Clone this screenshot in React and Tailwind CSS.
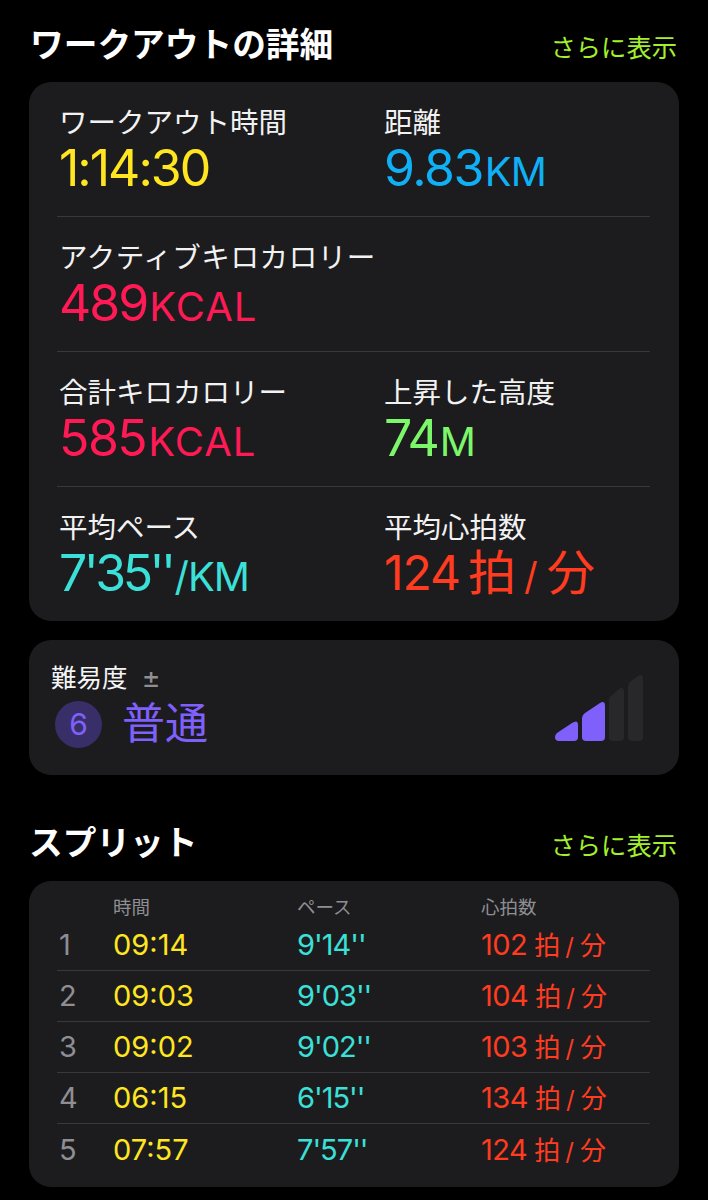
const font = { fontFamily: '"Inter", "Noto Sans CJK JP", sans-serif' }

function Metric({ label, value, unit, color, labelClass = '', valueClass = 'tracking-[-2px]', unitClass = 'tracking-[0px]' }) {
  return (
    <div className="min-w-0">
      <div className={`h-[34px] whitespace-nowrap text-[28.5px] leading-[34px] text-[#f2f2f2] ${labelClass}`}>{label}</div>
      <div className={`mt-[1px] flex h-[54px] items-baseline whitespace-nowrap text-[50px] leading-[54px] ${color}`}>
        <span className={valueClass}>{value}</span>
        {unit && <span className={`ml-[2px] text-[40px] ${unitClass}`}>{unit}</span>}
      </div>
    </div>
  )
}

function Header({ title, className }) {
  return (
    <div className={`flex items-center justify-between ${className}`}>
      <h2 className="whitespace-nowrap text-[33.7px] font-bold leading-[40px] text-white">{title}</h2>
      <span className="mt-[5px] text-[25.3px] leading-[32px] text-[#a4f02c]">さらに表示</span>
    </div>
  )
}

const splits = [
  ['1', '09:14', "9'14''", '102'],
  ['2', '09:03', "9'03''", '104'],
  ['3', '09:02', "9'02''", '103'],
  ['4', '06:15', "6'15''", '134'],
  ['5', '07:57', "7'57''", '124'],
]

function EffortBars() {
  return (
    <svg width="88" height="68" viewBox="0 0 88 68" className="block">
      <path d="M2 59 L17 49 Q23 45 23 51 V63 Q23 67 19 67 H4 Q0 67 0 63 Q0 61 2 59Z" fill="#7f60fb" />
      <path d="M27 44 Q27 41 30 39 L45 29 Q50 26 50 32 V63 Q50 67 46 67 H31 Q27 67 27 63Z" fill="#7f60fb" />
      <path d="M54 26 Q54 23 57 21 L64 15 Q69 12 69 18 V63 Q69 67 65 67 H58 Q54 67 54 63Z" fill="#28282a" />
      <path d="M73 12 Q73 9 76 7 L83 2 Q88 -1 88 5 V63 Q88 67 84 67 H77 Q73 67 73 63Z" fill="#28282a" />
    </svg>
  )
}

export default function App() {
  return (
    <div style={font} className="h-[1200px] w-[708px] overflow-hidden bg-black text-white">
      <Header title="ワークアウトの詳細" className="pl-[30px] pr-[31px] pt-[25px]" />

      <section className="mx-[29px] mt-[17px] h-[539px] rounded-[22px] bg-[#1c1c1e] pl-[28px] pr-[29px]">
        <div className="grid h-[135px] grid-cols-[325px_1fr] border-b border-[#38383a] pl-[2px] pt-[24px]">
          <Metric label="ワークアウト時間" value="1:14:30" color="text-[#ffe620]" />
          <Metric label="距離" value="9.83" valueClass="tracking-[-1.5px]" unit="KM" unitClass="tracking-[-1px]" color="text-[#0fb0f5]" />
        </div>
        <div className="h-[135px] border-b border-[#38383a] pl-[2px] pt-[24px]">
          <Metric label="アクティブキロカロリー" labelClass="tracking-[0.6px]" value="489" unit="KCAL" unitClass="tracking-[1px]" color="text-[#ff1a55]" />
        </div>
        <div className="grid h-[135px] grid-cols-[325px_1fr] border-b border-[#38383a] pl-[2px] pt-[24px]">
          <Metric label="合計キロカロリー" value="585" valueClass="tracking-[-1.5px]" unit="KCAL" unitClass="tracking-[1px]" color="text-[#ff1a55]" />
          <Metric label="上昇した高度" value="74" unit="M" color="text-[#7cf76a]" />
        </div>
        <div className="grid h-[134px] grid-cols-[325px_1fr] pl-[2px] pt-[24px]">
          <Metric label="平均ペース" value="7'35''" valueClass="tracking-[-3.5px]" unit="/KM" unitClass="tracking-[-1px]" color="text-[#3be0d8]" />
          <div className="min-w-0">
            <div className="h-[34px] whitespace-nowrap text-[28.5px] leading-[34px] text-[#f2f2f2]">平均心拍数</div>
            <div className="mt-[1px] flex h-[54px] items-baseline whitespace-nowrap text-[48px] leading-[54px] text-[#ff3b20]">
              <span className="tracking-[-1px]">124</span>
              <span className="ml-[8px]">拍</span>
              <span className="ml-[8px] text-[38px]">/</span>
              <span className="ml-[9px]">分</span>
            </div>
          </div>
        </div>
      </section>

      <section className="mx-[29px] mt-[19px] flex h-[135px] items-end justify-between rounded-[22px] bg-[#1c1c1e] pb-[27px] pl-[22px] pr-[36px]">
        <div>
          <div className="flex h-[32px] items-center text-[25.5px] leading-[32px] text-[#f5f5f5]">
            難易度
            <span className="ml-[14px] text-[29px] leading-[32px] text-[#8e8e93]">±</span>
          </div>
          <div className="mt-[7px] flex items-center pl-[4px]">
            <span className="flex h-[47px] w-[47px] items-center justify-center rounded-full bg-[#392f68] text-[30px] text-[#7f60fb]">6</span>
            <span className="ml-[20px] pb-[2px] text-[43px] leading-[45px] text-[#7f60fb]">普通</span>
          </div>
        </div>
        <div className="pb-[6px]">
          <EffortBars />
        </div>
      </section>

      <Header title="スプリット" className="pl-[29px] pr-[31px] pt-[48px]" />

      <section className="mx-[29px] mt-[18px] h-[306px] rounded-[22px] bg-[#1c1c1e] pl-[28px] pr-[29px] pt-[14px]">
        <div className="grid h-[25px] grid-cols-[56px_184px_184px_1fr] text-[18.5px] leading-[25px] text-[#8e8e93]">
          <span />
          <span>時間</span>
          <span>ペース</span>
          <span>心拍数</span>
        </div>
        {splits.map(([n, time, pace, hr], i) => (
          <div
            key={n}
            className={`grid h-[51px] grid-cols-[56px_184px_184px_1fr] items-center text-[29px] ${i < 4 ? 'border-b border-[#38383a]' : ''}`}
          >
            <span className="pl-[2px] text-[#8e8e93]">{n}</span>
            <span className="text-[#ffe620]">{time}</span>
            <span className="tracking-[-1px] text-[#3be0d8]">{pace}</span>
            <span className="flex items-baseline whitespace-nowrap text-[#ff3b20]">
              <span className="tracking-[-0.5px]">{hr}</span>
              <span className="ml-[7px] text-[26px]">拍</span>
              <span className="ml-[5px] text-[24px]">/</span>
              <span className="ml-[6px] text-[26px]">分</span>
            </span>
          </div>
        ))}
      </section>
    </div>
  )
}
